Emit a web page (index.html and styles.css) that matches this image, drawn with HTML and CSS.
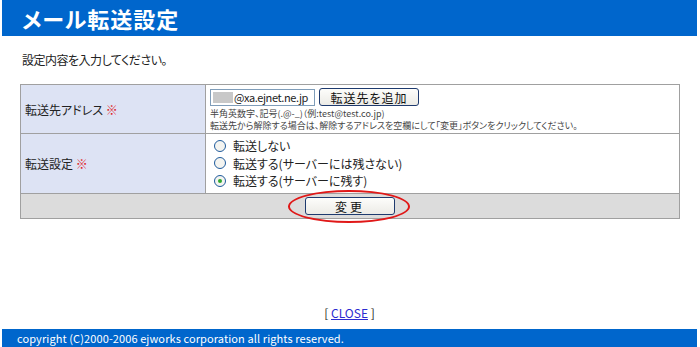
FILE: index.html
```html
<!DOCTYPE html>
<html lang="ja">
<head>
    <meta charset="UTF-8">
    <title>メール転送設定</title>
    <link rel="stylesheet" href="styles.css">
</head>
<body>

    <div class="page">
        <h1 class="title">メール転送設定</h1>

        <p class="intro">設定内容を入力してください。</p>

        <table class="form-table">
            <tr class="row-address">
                <th>転送先アドレス <span class="req">※</span></th>
                <td>
                    <div class="address-line">
                        <span class="address-input"><span class="mask"></span>@xa.ejnet.ne.jp</span>
                        <button class="btn btn-add">転送先を追加</button>
                    </div>
                    <p class="note">半角英数字、記号(.@-_)（例:test@test.co.jp)</p>
                    <p class="note">転送先から解除する場合は、解除するアドレスを空欄にして「変更」ボタンをクリックしてください。</p>
                </td>
            </tr>
            <tr class="row-mode">
                <th>転送設定 <span class="req">※</span></th>
                <td>
                    <label class="radio"><span class="dot"></span>転送しない</label>
                    <label class="radio"><span class="dot"></span>転送する(サーバーには残さない)</label>
                    <label class="radio"><span class="dot checked"></span>転送する(サーバーに残す)</label>
                </td>
            </tr>
            <tr class="row-submit">
                <td colspan="2">
                    <span class="submit-wrap">
                        <button class="btn btn-submit">変更</button>
                        <span class="circle"></span>
                    </span>
                </td>
            </tr>
        </table>

        <p class="close">[ <a href="#">CLOSE</a> ]</p>

        <div class="footer">copyright (C)2000-2006 ejworks corporation all rights reserved.</div>
    </div>

</body>
</html>
```

FILE: styles.css
```css
* {
    margin: 0;
    padding: 0;
    box-sizing: border-box;
}

body {
    font-family: "Noto Sans CJK JP", sans-serif;
    font-feature-settings: "palt";
    font-size: 12px;
    color: #222;
    background: #fff;
}

.page {
    margin: 0 3px 0 2px;
    height: 347px;
    display: flex;
    flex-direction: column;
}

.title {
    background: #0066cc;
    color: #fff;
    height: 36px;
    line-height: 36px;
    font-size: 22px;
    font-weight: bold;
    padding-left: 20px;
    letter-spacing: 1px;
}

.intro {
    margin-top: 17px;
    padding-left: 20px;
    line-height: 14px;
    letter-spacing: -0.5px;
}

.form-table {
    margin: 17px 0 0 18px;
    width: 660px;
    border-collapse: collapse;
    border: 1px solid #a0a0a0;
}

.form-table th,
.form-table td {
    border: 1px solid #a0a0a0;
    vertical-align: middle;
}

.form-table th {
    width: 185px;
    background: #dde3f4;
    font-weight: normal;
    text-align: left;
    padding-left: 4px;
}

.req {
    color: #e0201e;
}

.row-address {
    height: 48px;
}

.row-address td {
    padding: 3px 4px 1px 4px;
}

.address-line {
    display: flex;
    gap: 4px;
    align-items: center;
    margin-bottom: 2px;
}

.address-input {
    display: inline-flex;
    align-items: center;
    width: 105px;
    height: 17px;
    border: 1px solid #7f9db9;
    font-size: 11px;
    letter-spacing: -0.4px;
    padding-left: 2px;
    background: #fff;
    overflow: hidden;
    white-space: nowrap;
}

.mask {
    display: inline-block;
    flex: none;
    width: 20px;
    height: 11px;
    background: #c8c8c8;
    margin-right: 1px;
}

.btn {
    font-family: inherit;
    font-feature-settings: "palt";
    font-size: 12px;
    color: #111;
    background: linear-gradient(#fdfdfb, #ecebe6);
    border: 1px solid #1e3a6e;
    border-radius: 3px;
}

.btn-add {
    width: 100px;
    height: 18px;
    letter-spacing: 1px;
}

.note {
    font-size: 9px;
    line-height: 12px;
    color: #444;
}

.row-mode {
    height: 59px;
}

.row-mode td {
    padding: 3px 4px;
}

.radio {
    display: flex;
    align-items: center;
    height: 17.5px;
    gap: 7px;
    padding-left: 4px;
}

.dot {
    width: 12px;
    height: 12px;
    border: 1px solid #1f5b9c;
    border-radius: 50%;
    background: #f4f4f0;
    display: flex;
    align-items: center;
    justify-content: center;
}

.dot.checked::after {
    content: "";
    width: 4px;
    height: 4px;
    border-radius: 50%;
    background: #2fa82f;
}

.row-submit {
    height: 25px;
}

.row-submit td {
    background: #dcdcdc;
    text-align: center;
}

.submit-wrap {
    position: relative;
    display: inline-block;
    vertical-align: middle;
}

.btn-submit {
    width: 90px;
    height: 18px;
    letter-spacing: 3px;
    display: block;
}

.circle {
    position: absolute;
    left: -17px;
    top: -7px;
    width: 122px;
    height: 33px;
    border: 2px solid #e01818;
    border-radius: 50%;
}

.close {
    margin-top: auto;
    text-align: center;
    line-height: 14px;
    margin-bottom: 9px;
}

.close a {
    color: #2b2bd0;
}

.footer {
    background: #0066cc;
    color: #fff;
    height: 18px;
    line-height: 18px;
    font-size: 11px;
    letter-spacing: 0.1px;
    padding-left: 15px;
}
```
